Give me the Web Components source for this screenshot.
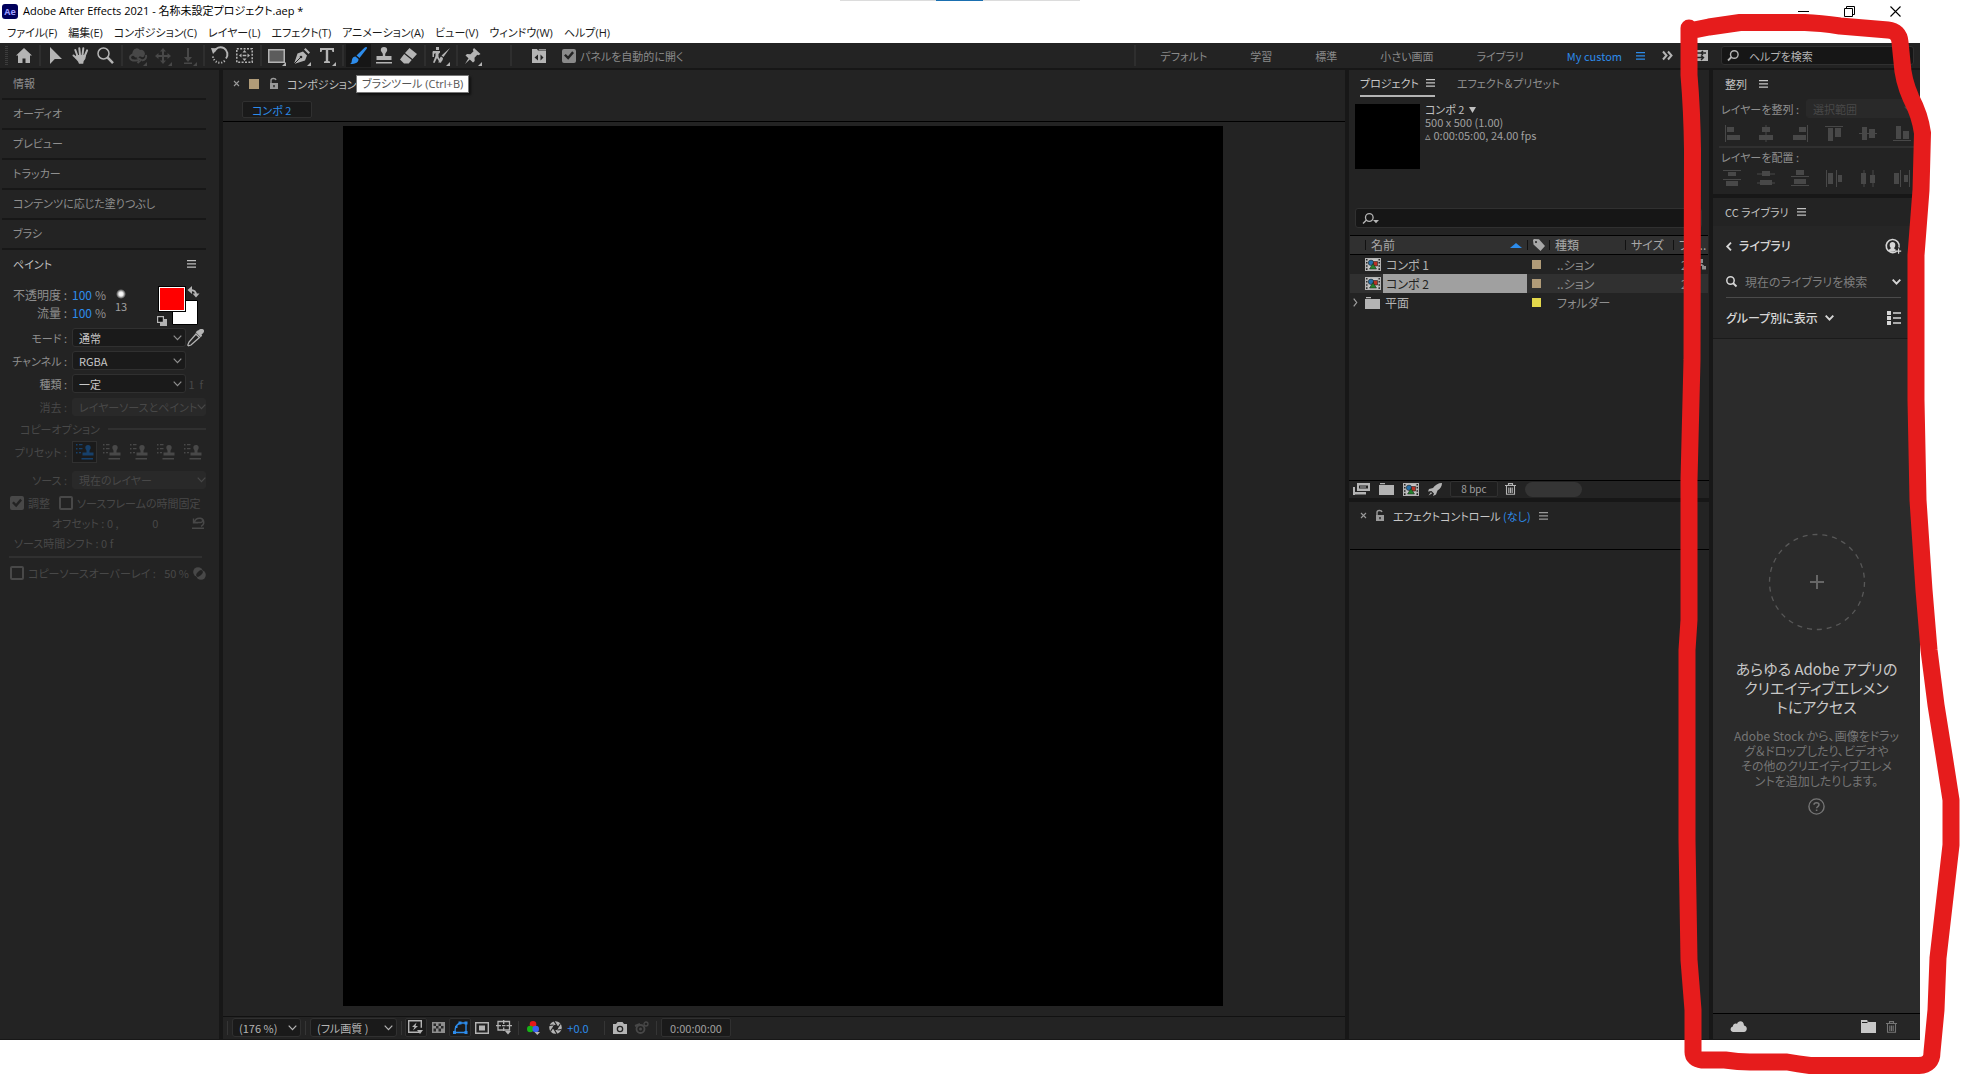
<!DOCTYPE html>
<html lang="ja">
<head>
<meta charset="utf-8">
<title>Adobe After Effects 2021</title>
<style>
html,body{height:100%}
body{margin:0;background:#fff;font-family:"Noto Sans CJK JP","Noto Sans",sans-serif;font-size:12px;line-height:16px;font-feature-settings:"palt";color:#a0a0a0}
</style>
</head>
<body>
<ae-app></ae-app>
<script>
const BASE = `
:host,*{box-sizing:border-box}
button,input,select{font:inherit;font-feature-settings:inherit;color:inherit;background:none;border:0;margin:0;padding:0;border-radius:0;outline:0;line-height:16px}
button{white-space:nowrap;display:flex;align-items:center}
label,span{white-space:nowrap}
.drop{position:relative;display:flex;align-items:center;height:19px;min-width:0}
.drop select{appearance:none;-webkit-appearance:none;width:100%;height:100%;background:#1a1a1a;border:1px solid #303030;border-radius:3px;padding:0 16px 0 6px;color:#c8c8c8;opacity:1;text-overflow:clip}
.drop ae-icon{position:absolute;right:4px;pointer-events:none}
.drop.off select{background:#292929;border-color:#292929;color:#484848;padding-right:8px}
.drop.off ae-icon{color:#484848;right:0}
input[type=checkbox]{appearance:none;-webkit-appearance:none;width:14px;height:14px;flex:none;border:2px solid currentColor;border-radius:2px;display:grid;place-content:center}
input[type=checkbox]:checked{background:currentColor}
input[type=checkbox]:checked::before{content:"";width:10px;height:10px;background:#232323;clip-path:polygon(0 50%,18% 35%,40% 58%,82% 8%,100% 25%,42% 92%)}
`;
function define(name, css, html){
  customElements.define(name, class extends HTMLElement{
    constructor(){
      super();
      const t=document.createElement('template');
      t.innerHTML=`<style>${BASE}${css}</style>${html}`;
      this.attachShadow({mode:'open'}).append(t.content.cloneNode(true));
    }
  });
}

const stampShape='<path d="M10 0a3.200 3.200 0 0 0-3.200 3.200c0 1.600 2 2.300 2 4V9H2.500v4h15V9h-6.300V7.200c0-1.700 2-2.400 2-4A3.200 3.200 0 0 0 10 0zM2 15h16v1.600H2z"/>';
const comp='<path d="M0 0h16v13H0zM1 1v1.500h1.500V1zm0 3v1.500h1.500V4zm0 3.200v1.500h1.500V7.200zm0 3.100V12h1.500v-1.700zM13.500 1v1.500H15V1zm0 3v1.500H15V4zm0 3.200v1.500H15V7.200zm0 3.100V12H15v-1.700z" fill="#b4b4b4" fill-rule="evenodd"/><path d="M3.500 1.500h9v10h-9z" fill="#c9c9c9"/><circle cx="6" cy="4.800" r="2.700" fill="#236ea8" stroke="#222" stroke-width=".6"/><path d="M8.500 3.500h4v4.500h-4z" fill="#b83224" stroke="#222" stroke-width=".6"/><path d="M8 5.500l3.500 5.500h-7z" fill="#23832d" stroke="#222" stroke-width=".6"/>';
const ICONS={
 home:[16,15,'<path d="M8 0L0 7.500h2V15h4.500v-4.500h3V15H14V7.500h2z"/>'],
 arrow:[12,17,'<path d="M0 0v17l4.800-5H12z"/>'],
 hand:[17,17,'<g fill="none" stroke="currentColor" stroke-width="2" stroke-linecap="round"><path d="M5.500 9L3.300 3M8 8L7.300 1.300M10.500 8l.8-6.700M12.700 9l2.400-5.700M4.500 11L1.500 8.500"/></g><path d="M4.500 8h9.200c.3 2.500-.3 4.500-2 6l-.5 2.700H7L6 14.500 2.500 10.500z"/>'],
 zoom:[17,17,'<g fill="none" stroke="currentColor"><circle cx="6.500" cy="6.500" r="5.500" stroke-width="1.500"/><path d="M10.700 10.700l5.300 5.500" stroke-width="2.500"/></g>'],
 orbit:[18,16,'<path d="M4 3a4 4 0 0 1 7-1 4 4 0 0 1 4 6.500c-1 1-3 1-4-.5-1.500 2-5 2-6 0C3 8 3 5 4 3z"/><path d="M5 6C-1 8 0 13 7 12.500l3-.5M8 9.500l4 2.500-3.500 3M17 7c1 3-1 5-4 5.500" fill="none" stroke="currentColor" stroke-width="2"/>'],
 pan:[16,16,'<path d="M8 0l3 3.500H9V7h3.500V5L16 8l-3.500 3V9H9v3.500h2L8 16l-3-3.500h2V9H3.500v2L0 8l3.500-3v2H7V3.500H5z"/>'],
 dolly:[12,16,'<path d="M5 0h2v9h3l-4 5-4-5h3zM2 14.500h8V16H2z"/>'],
 rotate:[17,17,'<path d="M3 4.500a7 7 0 1 1 12 7" fill="none" stroke="currentColor" stroke-width="2"/><path d="M2 9.500a7 7 0 0 0 12.500 3.500" fill="none" stroke="currentColor" stroke-width="2" stroke-dasharray="1.200 1.600"/><path d="M0 1l7 .5-5 5.500z"/>'],
 anchor:[17,15,'<rect x=".8" y=".8" width="15.400" height="13.400" fill="none" stroke="currentColor" stroke-width="1.500" stroke-dasharray="2 1.400"/><path d="M8.500 2l2 2.500h-4zM8.500 13l2-2.500h-4zM3 7.500l2.500-2v4zM14 7.500l-2.500-2v4zM6.700 6.700h3.600v1.600H6.700z"/>'],
 rect:[17,14,'<path d="M.75.75h15.500v12.500H.75z" fill="#5c5c5c" stroke="currentColor" stroke-width="1.500"/>'],
 pen:[16,16,'<path d="M0 16L3.500 5.500 9 3.500l4 4L11 12.500z"/><path d="M10 1.500L11.500 0 16 4.500 14.500 6z"/><path d="M0 16l6.500-6.500" stroke="#232323" stroke-width="1"/><circle cx="7" cy="9" r="1.300" fill="#232323"/>'],
 type:[14,15,'<path d="M0 0h14v4h-1.500l-.7-2H8.200v11l1.800.5V15H4v-1.500l1.800-.5V2H2.200l-.7 2H0z"/>'],
 brush:[17,17,'<path d="M16.500 0c.8.500.5 1.200 0 2L9.500 11 6.500 8.500 14.500.8c.8-.7 1.300-1 2-.8zM5.500 9.500l3 2.500c.3 3-2.500 5-8.500 5 2-1 1.500-2.500 2-4.500.5-1.800 1.800-3 3.500-3z"/>'],
 stamp:[20,17,stampShape],
 eraser:[17,16,'<path d="M9.500 0L17 6l-4.500 5L5 5zM4.200 6l7.500 6-3 3.500H4L0 11.500z"/>'],
 roto:[19,17,'<path d="M5 0h3v3H5zM2 4h7v1.500L7.500 7v3l3 5-1.500 1-3-5-2.500 5L2 15.500 4.500 9V6L3 7v3H1.500V5z"/><path d="M19 1l-6.500 9-2-1.500zM10 9.500l2 1.500c0 3-2 4.500-5 4.500 1.500-1 1-4 3-6z"/>'],
 pin:[16,16,'<path d="M9 0l6.500 6-2 1.200-1.200-.5-2.800 3 .2 3.300-1.700 1.500-3.200-3L0 16l3.500-5.700L.5 7.500 2 6l3.500.2 3-3-.7-1.500z"/>'],
 panelopen:[14,14,'<path fill-rule="evenodd" d="M0 0h5l1 1.500h8V14H0zM6 5.500L2.500 8.500 6 11.500zM8.500 5.500v6l3-3zM6.500 0H14v.8H7z"/>'],
 burger:[9,8,'<path d="M0 0h9v1.200H0zM0 3.300h9v1.200H0zM0 6.600h9v1.200H0z"/>'],
 more:[11,9,'<path d="M1 .5l3.500 4L1 8.500M6 .5l3.500 4L6 8.500" fill="none" stroke="currentColor" stroke-width="2"/>'],
 sync:[16,11,'<path d="M0 0h16v11H0z"/><path d="M3 3h6M11 1l-2 2 2 2M9 3h5M2 7.500h9M9 5.500l2.500 2L9 10" stroke="#232323" fill="none" stroke-width="1.400"/>'],
 search:[12,11,'<circle cx="7.300" cy="4.500" r="3.800" fill="none" stroke="currentColor" stroke-width="1.400"/><path d="M4.500 7L1 10.500" stroke="currentColor" stroke-width="1.800"/>'],
 searchdrop:[17,11,'<circle cx="7.300" cy="4.500" r="3.800" fill="none" stroke="currentColor" stroke-width="1.300"/><path d="M4.500 7L1 10.500" stroke="currentColor" stroke-width="1.500"/><path d="M11 7h6l-3 3.200z"/>'],
 find:[11,11,'<circle cx="4.500" cy="4.500" r="3.700" fill="none" stroke="currentColor" stroke-width="1.500"/><path d="M7 7l3.500 3.500" stroke="currentColor" stroke-width="1.800"/>'],
 chev:[9,6,'<path d="M.7.7l3.800 4 3.800-4" fill="none" stroke="currentColor" stroke-width="1.200"/>'],
 chevb:[9,6,'<path d="M.7.7l3.800 4 3.800-4" fill="none" stroke="currentColor" stroke-width="1.900"/>'],
 back:[6,9,'<path d="M5 .7L1.200 4.500 5 8.300" fill="none" stroke="currentColor" stroke-width="1.800"/>'],
 tri:[5,9,'<path d="M.7.700l3 3.800-3 3.800" fill="none" stroke="currentColor" stroke-width="1.200"/>'],
 close:[7,7,'<path d="M1 1l5 5M6 1L1 6" stroke="currentColor" stroke-width="1.100"/>'],
 lock:[10,11,'<path fill-rule="evenodd" d="M1 5h8v6H1zM4.300 7v2.300h1.400V7z"/><path d="M2 5V2.500C2 0 6.500 0 7 2" fill="none" stroke="currentColor" stroke-width="1.400"/>'],
 dot:[12,12,'<defs><radialGradient id="g"><stop offset="0" stop-color="#fff"/><stop offset=".4" stop-color="#eee"/><stop offset="1" stop-color="#fff" stop-opacity="0"/></radialGradient></defs><circle cx="6" cy="6" r="5" fill="url(#g)"/>'],
 swatch:[44,40,'<path d="M14.500 14.500h25v24h-25z" fill="#fff" stroke="#000"/><path d="M0 0h28v26H0z" fill="#000"/><path d="M1 1h26v24H1z" fill="#fff"/><path d="M2 2h24v22H2z" fill="red"/><path d="M32 4c4 0 6 1 6 5" fill="none" stroke="#b4b4b4" stroke-width="2"/><path d="M34 0v8l-4.500-4zM34.500 7.500h7L38 11.500z" fill="#b4b4b4"/>'],
 defcol:[10,10,'<path d="M3 3h7v7H3z"/><path d="M.6.6h5.800v5.800H.6z" fill="#111" stroke="currentColor" stroke-width="1.200"/>'],
 dropper:[17,17,'<path d="M11.500 1.200C13-.5 16.500-.2 17 1.500c.3 1.500-.5 2.500-2.500 4l.7 1.200-1.500 1.500-5-5L10.200 1.700z"/><path d="M9 5l3.500 3.500L4 16l-2.500.8L.8 16 2 13z" fill="none" stroke="currentColor" stroke-width="1.300"/>'],
 preset:[18,16,'<path d="M12 1a2.700 2.700 0 0 0-2.700 2.700c0 1.300 1.200 2 1.200 3.300v1.500H6.500v3h11v-3h-4V7c0-1.300 1.200-2 1.200-3.300A2.700 2.700 0 0 0 12 1zM5.500 14H17v1.500H5.500z"/><path d="M0 0h1.500v1.500H0zM3 0h3.500v1.200H3zM0 4h1.500v1.500H0zM3 4h3.500v1.200H3zM0 8h1.500v1.500H0zM3 8h2v1.200H3z"/>'],
 reset:[13,12,'<path d="M2.500 5.500H8.500a2 2 0 0 0 0-4.200C5.500 1 3 2 2.500 5.500M1.500 1.500v4.200h4.500M0 11.300h12M9 9.300c4-1.500 3.500-7-.5-8" fill="none" stroke="currentColor" stroke-width="1.400"/>'],
 blend:[13,13,'<circle cx="5" cy="5" r="4.800"/><circle cx="8" cy="8" r="4.800"/><ellipse cx="6.500" cy="6.500" rx="2.200" ry="4" transform="rotate(45 6.500 6.500)" fill="#232323"/>'],
 fast:[17,15,'<path d="M11 12.200H.7V.7h12.600v7" fill="none" stroke="currentColor" stroke-width="1.400"/><path d="M8.500 2.500L4 7h2.500L5 10.500l5-4.500H7.500zM9 10h6l-3 4z"/>'],
 checker:[13,11,'<path d="M0 0h13v11H0z" fill="#8e8e8e"/><path d="M1.500 1.500h2.500V4H1.500zM6.500 1.500H9V4H6.500zM4 4h2.500v2.500H4zM9 4h2.500v2.500H9zM1.500 6.500H4V9.500H1.500zM6.500 6.500H9v3H6.500z" fill="#2a2a2a"/>'],
 mask:[15,13,'<path d="M2 11C2 6 3 4 7 2h6v9.500H2z" fill="none" stroke="currentColor" stroke-width="1.400"/><path d="M0 10h3v3H0zM5.500.5h3v3h-3zM11.500.5h3v3h-3zM11.500 10h3v3h-3zM2 5h2.500v2H2z"/>'],
 roi:[14,12,'<path d="M.7.700h12.600v10.600H.7z" fill="none" stroke="currentColor" stroke-width="1.400"/><path d="M4 3.500h6v5H4z"/>'],
 grid:[16,15,'<path d="M2 1.500h11.500v8.500H2z M7.700 0v4M7.700 7.500V11M0 5.700h5M10.500 5.700H16M6 5.700h3.500" fill="none" stroke="currentColor" stroke-width="1.300"/><path d="M9 11h6l-3 3.500z"/>'],
 rgb:[13,14,'<circle cx="6" cy="3.300" r="3.300" fill="#e81818"/><circle cx="3.300" cy="8" r="3.300" fill="#16b316"/><circle cx="8.700" cy="8" r="3.300" fill="#3b62ee"/><path d="M7.500 11H13l-2.700 3z"/>'],
 aperture:[13,13,'<circle cx="6.500" cy="6.500" r="4.500" fill="none" stroke="currentColor" stroke-width="3.600"/><path d="M5 0l2.500 4M11.500 2.500L9 6.500M12.500 8.500L8.500 9M8 13L5.500 9M1.500 10.500L4 6.500M0 4.500L4.500 4" stroke="#232323" stroke-width="1.200"/>'],
 camera:[14,12,'<path fill-rule="evenodd" d="M4.500 0h5L11 2h3v10H0V2h3zM7 3.700a3.300 3.300 0 1 0 0 6.600 3.300 3.300 0 0 0 0-6.600zM7 5a2 2 0 1 1 0 4 2 2 0 0 1 0-4z"/>'],
 showsnap:[14,13,'<circle cx="5.500" cy="8" r="4" fill="none" stroke="currentColor" stroke-width="1.800"/><circle cx="5.500" cy="8" r="1.500"/><circle cx="11" cy="3" r="2" fill="none" stroke="currentColor" stroke-width="1.300"/><path d="M0 5l5-2" stroke="currentColor" stroke-width="2"/>'],
 comp:[16,13,comp],
 folder:[15,12,'<path d="M0 2h15v10H0zM1 0h5v1.200H1z"/>'],
 tag:[12,12,'<path fill-rule="evenodd" d="M0 1l1-1 5 .3L12 7l-4.500 5L.5 5.500zM3 2a1.100 1.100 0 1 0 0 2.200A1.100 1.100 0 0 0 3 2z"/>'],
 sort:[12,5,'<path d="M6 0l6 5H0z"/>'],
 flow:[9,11,'<path d="M2 0h4v4H2zM0 7h3v3.500H0zM5 7h4v3.500H5zM3.500 4v2.500H1V7h6v-.5z"/>'],
 interpret:[17,12,'<path d="M4 0h13v8H4z"/><path d="M6 2.500h9v3H6z" fill="#232323"/><path d="M7 3.500h6v1H7zM0 4h2v8H0zM0 9h13v2.500H0z"/>'],
 rocket:[14,13,'<path d="M14 0c-4 0-7 2-9 5L1 6 0 8.500l3.500-.5 2.500 2.500L5 13l3-1.500 1.500-4C12.500 5.500 14 3 14 0zM3 9l-2.500 3.500L4 10.500z"/>'],
 trash:[11,12,'<path d="M0 2.500h11M3.500 2V.6h4V2M1.500 3v8.300h8V3M3.800 4.500v5.500M5.500 4.500v5.500M7.200 4.500v5.500" fill="none" stroke="currentColor" stroke-width="1.100"/>'],
 caret:[7,6,'<path d="M0 0h7L3.500 6z"/>'],
 user:[16,15,'<path d="M11.500 12.300a6.500 6.500 0 1 1 2.500-3.800" fill="none" stroke="currentColor" stroke-width="1.600"/><path d="M7.500 3c3.600 0 3.300 4.500 1.700 6 0 1.300 1.300 1.400 2 2C10 13 5 13.500 3 11.500c.5-1.200 2.800-1 2.800-2.500C4.200 7.500 4 3 7.500 3zM11 11.500h2v-2h1.200v2h2v1.200h-2v2H13v-2h-2z"/>'],
 list:[14,14,'<path d="M0 0h4v4H0zM0 5h4v4H0zM0 10h4v4H0zM6 1.300h8v1.400H6zM6 6.300h8v1.400H6zM6 11.300h8v1.400H6z"/>'],
 cloud:[17,11,'<path d="M2.800 11a2.800 2.800 0 0 1 0-5.500C3 3 5.500 1.800 7 3c1-4 7-4 7 1.500C18 5 17.500 11 14 11z"/>'],
 libfolder:[15,13,'<path d="M0 0h6l1.500 2H15v11H0z"/><path d="M1 2.500h5l.8-.7" stroke="#232323" fill="none"/>'],
 drop:[98,98,'<circle cx="49" cy="49" r="47.500" fill="none" stroke="#585858" stroke-width="1.300" stroke-dasharray="5 4.950"/><path d="M42 49h14M49 42v14" stroke="#666" stroke-width="2"/>'],
 help:[17,17,'<circle cx="8.500" cy="8.500" r="7.600" fill="none" stroke="currentColor" stroke-width="1.400"/><path d="M6 6.800C6 4 11 4 11 6.800c0 1.800-2.400 1.700-2.400 3.500" fill="none" stroke="currentColor" stroke-width="1.500"/><path d="M7.800 11.500h1.600V13H7.800z"/>'],
 al:[15,17,'<path d="M0 0h1v17H0zM2 2h7v5H2zM2 10h13v5H2z"/>'],
 ac:[15,17,'<path d="M6.500 0h1v17h-1zM3 2h8v5H3zM0 10h14v5H0z"/>'],
 ar:[15,17,'<path d="M14 0h1v17h-1zM6 2h7v5H6zM0 10h13v5H0z"/>'],
 at:[18,15,'<path d="M0 0h18v1H0zM3 2h5v13H3zM10 2h6v9h-6z"/>'],
 am:[18,15,'<path d="M0 7h18v1H0zM3 1h5v13H3zM10 3h6v9h-6z"/>'],
 ab:[18,15,'<path d="M0 14h18v1H0zM3 0h5v13H3zM10 5h6v8h-6z"/>'],
 dt:[18,16,'<path d="M0 0h18v1H0zM5 2h8v4H5zM0 9h18v1H0zM3 11h12v5H3z"/>'],
 dm:[18,15,'<path d="M0 2.500h18v1H0zM5 0h8v5H5zM0 11.500h18v1H0zM3 9h12v5H3z"/>'],
 db:[18,16,'<path d="M0 6h18v1H0zM5 0h8v5H5zM0 15h18v1H0zM3 9h12v5H3z"/>'],
 dl:[16,17,'<path d="M0 0h1v17H0zM2 3h5v11H2zM10 0h1v17h-1zM12 5h4v7h-4z"/>'],
 dc:[15,17,'<path d="M2.500 0h1v17h-1zM0 3h5v11H0zM11.500 0h1v17h-1zM9 5h5v8H9z"/>'],
 dr:[16,17,'<path d="M6 0h1v17H6zM0 3h5v11H0zM15 0h1v17h-1zM10 5h4v7h-4z"/>'],
 min:[11,11,'<path d="M0 5h11v1H0z"/>'],
 restore:[11,11,'<path d="M.5 2.500h8v8h-8zM2.500 2V.5h8v8H9" fill="none" stroke="currentColor"/>'],
 x:[11,11,'<path d="M.5.500l10 10M10.500.500l-10 10" fill="none" stroke="currentColor" stroke-width="1.100"/>']
};
customElements.define('ae-icon', class extends HTMLElement{
  constructor(){super();this.attachShadow({mode:'open'})}
  connectedCallback(){
    const [w,h,body]=ICONS[this.getAttribute('name')];
    this.shadowRoot.innerHTML=`<style>:host{display:inline-flex;flex:none}svg{display:block;fill:currentColor;overflow:visible}</style><svg width="${w}" height="${h}" viewBox="0 0 ${w} ${h}" aria-hidden="true">${body}</svg>`;
  }
});
const ic=n=>`<ae-icon name="${n}"></ae-icon>`;
const ib=(n,l,c='')=>`<button class="${c}" aria-label="${l}">${ic(n)}</button>`;

define('ae-titlebar',`
:host{display:flex;align-items:center;height:22px;padding:0 2px 0 2px;color:#000;font-family:"Open Sans","Noto Sans CJK JP",sans-serif;font-size:11px;background:#fff}
.logo{width:16px;height:15px;border-radius:3px;background:#00005b;color:#9c9cff;font-size:9px;line-height:15px;font-weight:700;text-align:center;margin-right:5px}
.t{flex:1}
button{width:46px;height:22px;justify-content:center}
`,`<span class="logo">Ae</span><span class="t">Adobe After Effects 2021 - 名称未設定プロジェクト.aep *</span>${ib('min','最小化')}${ib('restore','元に戻す')}${ib('x','閉じる')}`);

define('ae-menubar',`
:host{display:flex;align-items:center;gap:11px;height:21px;padding-left:7px;background:#fff;color:#1a1a1a;font-family:"Open Sans","Noto Sans CJK JP",sans-serif;font-size:11px}
`,['ファイル(F)','編集(E)','コンポジション(C)','レイヤー(L)','エフェクト(T)','アニメーション(A)','ビュー(V)','ウィンドウ(W)','ヘルプ(H)'].map(m=>`<button>${m}</button>`).join(''));

define('ae-tooltip',`:host{display:block;padding:0 5px;background:#fff;border:1px solid #777;color:#555;box-shadow:2px 2px 2px #0008;white-space:nowrap;font-family:"Open Sans","Noto Sans CJK JP",sans-serif;font-size:11px}`,`<slot></slot>`);

define('ae-toolbar',`
:host{display:flex;align-items:center;height:27px;padding-left:11px;background:#232323;border-bottom:2px solid #171717;position:relative;z-index:2}
:host::before{content:"";position:absolute;left:5px;top:3px;bottom:3px;width:3px;background:repeating-linear-gradient(#3c3c3c 0 1px,#232323 1px 2px)}
.b{width:25px;height:23px;justify-content:center;color:#b4b4b4;position:relative}
.off{color:#484848}
.m::after{content:"";position:absolute;right:3px;bottom:1px;border:2px solid transparent;border-right-color:currentColor;border-bottom-color:currentColor}
.on{color:#2d8ceb;background:#161616}
i{width:7px;height:21px;display:flex;justify-content:center;flex:none}
i::before{content:"";width:2px;background:#2e2e2e}
.tip{position:relative;display:flex}
ae-tooltip{position:absolute;left:10px;top:31px}
.auto{display:flex;align-items:center;gap:4px;color:#8a8a8a;margin-left:11px;font-size:11px}
.far{margin-left:22px}.pnl{margin-left:12px}
.sp{flex:1}
nav{display:flex;gap:43px;align-items:center;font-size:11px;color:#8a8a8a;padding-left:22px;margin-right:14px}
nav .cur{color:#2d8ceb}
.ws{color:#2d8ceb;margin-right:17px}
.mo{color:#b4b4b4;margin-right:19px}
.sy{color:#b4b4b4;margin-right:13px}
.q{display:flex;align-items:center;gap:10px;width:193px;height:19px;background:#161616;border:1px solid #303030;border-radius:3px;padding-left:5px;color:#b4b4b4;margin-right:6px;font-size:11px}
input::placeholder{color:#b4b4b4;opacity:1}
.q input{width:140px}
`,`${ib('home','ホーム','b')}<i></i>${ib('arrow','選択ツール','b')}${ib('hand','手のひらツール','b')}${ib('zoom','ズームツール','b')}<i></i>${ib('orbit','軌道カメラ','b off m')}${ib('pan','パン','b off m')}${ib('dolly','ドリー','b off m')}<i></i>${ib('rotate','回転ツール','b')}${ib('anchor','アンカーポイントツール','b')}<i></i>${ib('rect','長方形ツール','b m')}${ib('pen','ペンツール','b m')}${ib('type','文字ツール','b m')}<i></i><span class="tip">${ib('brush','ブラシツール','b on')}<ae-tooltip>ブラシツール (Ctrl+B)</ae-tooltip></span>${ib('stamp','コピースタンプツール','b')}${ib('eraser','消しゴムツール','b')}<i></i>${ib('roto','ロトブラシツール','b m')}<i></i>${ib('pin','パペットピンツール','b m')}<i class="far"></i><span class="pnl">${ib('panelopen','パネル','b')}</span><label class="auto"><input type="checkbox" checked>パネルを自動的に開く</label><span class="sp"></span><i></i><nav><button>デフォルト</button><button>学習</button><button>標準</button><button>小さい画面</button><button>ライブラリ</button><button class="cur">My custom</button></nav>${ib('burger','ワークスペースメニュー','ws')}${ib('more','その他','mo')}${ib('sync','ワークスペース','sy')}<label class="q">${ic('search')}<input type="search" aria-label="ヘルプを検索" placeholder="ヘルプを検索"></label>`);

define('ae-side-tab',`:host{display:flex;align-items:center;height:30px;padding:0 11px 2px;margin-left:2px;border-bottom:2px solid #171717;font-size:11px;color:#8f8f8f}`,`<button><slot></slot></button>`);

define('ae-paint',`
:host{display:block;font-size:11px;position:relative;color:#8f8f8f}
.h{display:flex;justify-content:space-between;align-items:center;height:28px;padding:0 10px 0 13px;color:#c0c0c0}
.r{display:grid;grid-template-columns:72px 114px 1fr;align-items:center;height:23px}
.r>label,.r>.l{text-align:right;padding-right:5px}
.v{display:flex;gap:3px;align-items:center}
.v button{color:#2d8ceb}
.top{display:flex;height:48px;padding-top:8px;font-size:12px}
.top .r{height:18px;grid-template-columns:72px 40px}
.br{display:flex;flex-direction:column;align-items:center;margin:2px 0 0 2px;width:14px;color:#a0a0a0;line-height:12px;font-size:11px}
.sw{margin-left:30px;align-self:flex-start}
.df{position:absolute;left:157px;top:66px;color:#b4b4b4}
.dp{color:#b4b4b4;padding-left:1px}
.off{color:#484848}
.wide{grid-template-columns:72px 1fr}
.wide .drop{height:18px}
.sec{display:flex;align-items:center;height:22px;gap:8px;padding-left:20px}
.sec::after{content:"";flex:1;height:2px;background:#303030}
.pre{display:flex;gap:2px;margin-right:-8px}
.pre button{width:25px;height:22px;justify-content:center;border:1px solid transparent}
.pre .on{border-color:#303030;background:#1b1b1b;color:#17406a}
.src{height:26px;margin:4px 0 0}
.ck{display:flex;align-items:center;height:20px;gap:4px;padding:0 0 0 10px}
.ck label{display:flex;align-items:center;gap:4px}
.ck label+label{margin-left:5px}
.of{padding:0 1px 0 52px}
.of span+span{flex:1;text-align:center}
.tm{padding-left:14px}
.ov{height:26px}
.ov span{margin-left:auto}
hr{border:0;height:2px;background:#303030;margin:3px 4px 2px 9px}
`,`<div class="h"><span>ペイント</span>${ib('burger','パネルメニュー')}</div>
<div class="top"><div><div class="r"><span class="l">不透明度 :</span><span class="v"><button>100</button>%</span></div><div class="r"><span class="l">流量 :</span><span class="v"><button>100</button>%</span></div></div><span class="br">${ic('dot')}<span>13</span></span>${ib('swatch','描画色','sw')}${ib('defcol','初期色','df')}</div>
<div class="r"><label for="a">モード :</label><span class="drop"><select id="a"><option>通常</option></select>${ic('chev')}</span>${ib('dropper','スポイト','dp')}</div>
<div class="r"><label for="b">チャンネル :</label><span class="drop"><select id="b"><option>RGBA</option></select>${ic('chev')}</span></div>
<div class="r"><label for="c">種類 :</label><span class="drop"><select id="c"><option>一定</option></select>${ic('chev')}</span><span class="off">&nbsp;1&nbsp; f</span></div>
<div class="off"><div class="r wide"><label for="d">消去 :</label><span class="drop off"><select id="d" disabled><option>レイヤーソースとペイント</option></select>${ic('chev')}</span></div>
<div class="sec">コピーオプション</div>
<div class="r wide"><span class="l">プリセット :</span><span class="pre">${ib('preset','プリセット 1','on')}${ib('preset','プリセット 2')}${ib('preset','プリセット 3')}${ib('preset','プリセット 4')}${ib('preset','プリセット 5')}</span></div>
<div class="r wide src"><label for="e">ソース :</label><span class="drop off"><select id="e" disabled><option>現在のレイヤー</option></select>${ic('chev')}</span></div>
<div class="ck"><label><input type="checkbox" checked disabled>調整</label><label><input type="checkbox" disabled>ソースフレームの時間固定</label></div>
<div class="ck of"><span>オフセット : 0 ,</span><span>0</span>${ib('reset','リセット')}</div>
<div class="ck tm"><span>ソース時間シフト : 0 f</span></div><hr>
<div class="ck ov"><label><input type="checkbox" disabled>コピーソースオーバーレイ :</label><span>50 %</span>${ib('blend','差の絶対値モード')}</div></div>`);

define('ae-left',`:host{display:block;width:219px;flex:none;background:#232323;padding-right:13px;overflow:hidden}`,
 ['情報','オーディオ','プレビュー','トラッカー','コンテンツに応じた塗りつぶし','ブラシ'].map(t=>`<ae-side-tab>${t}</ae-side-tab>`).join('')+'<ae-paint></ae-paint>');

define('ae-composition',`
:host{display:flex;flex-direction:column;flex:1;min-width:0;background:#232323}
.h{display:flex;align-items:center;height:27px;padding-left:10px;color:#9a9a9a}
.sq{width:10px;height:10px;background:#b09b78;margin:0 10px 0 9px}
.h .n{color:#c0c0c0;margin-left:8px;font-size:11px}
.chip{margin:4px 0 3px 19px;width:70px;height:17px;padding-left:9px;background:#1a1a1a;border:1px solid #303030;border-radius:2px;color:#2d8ceb;font-size:11px}
.v{flex:1;min-height:0;display:flex;justify-content:center;padding:4px 3px 10px 0;border-top:1px solid #000}
.c{height:100%;aspect-ratio:1;background:#000}
.f{display:flex;align-items:center;height:23px;border-top:1px solid #111;color:#b4b4b4;padding:0 0 1px 4px;font-size:11px}
.f i{width:1px;height:14px;background:#353535}
.f button{width:22px;height:19px;justify-content:center}
.f .bl{color:#2d8ceb}
.f .ev{width:24px}
.f .bx{border:1px solid #303030;background:#1a1a1a;border-radius:2px}
.f .tc{width:70px;margin-left:1px;color:#a0a0a0}
.f .s{margin:0 3px}
.f .s2{margin:0 4px 0 14px}
.dim{color:#484848}
.drop{margin:0 4px}
.zoom{width:69px}.res{width:87px}
.drop select{color:#b4b4b4}
`,`<div class="h">${ib('close','閉じる')}<span class="sq"></span>${ic('lock')}<span class="n">コンポジション</span></div>
<button class="chip">コンポ 2</button><div class="v"><div class="c"></div></div>
<div class="f"><i></i><span class="drop zoom"><select aria-label="拡大率"><option>(176 %)</option></select>${ic('chev')}</span><i></i><span class="drop res"><select aria-label="解像度"><option>(フル画質 )</option></select>${ic('chev')}</span><i style="margin-right:3px"></i>${ib('fast','高速プレビュー','bx')}${ib('checker','透明グリッド')}${ib('mask','マスク表示','bl bx')}${ib('roi','目標範囲')}${ib('grid','グリッド')}<i class="s"></i>${ib('rgb','チャンネル')}${ib('aperture','露出')}<button class="bl ev">+0.0</button><i class="s2"></i>${ib('camera','スナップショット')}<span class="dim">${ib('showsnap','スナップショットを表示')}</span><i class="s"></i><button class="bx tc">0:00:00:00</button></div>`);

define('ae-project',`
:host{display:flex;flex-direction:column;height:428px;flex:none;background:#232323;font-size:11px}
.tabs{display:flex;height:27px;align-items:center;padding-left:11px;gap:22px}
.tabs button{height:27px;color:#8f8f8f;border-bottom:2px solid transparent}
.tabs .on{gap:7px;color:#c8c8c8;border-color:#b4b4b4}
.info{display:flex;gap:5px;padding:6px 0 0 6px;height:110px}
.th{width:65px;height:65px;margin-top:1px;background:#000}
.info button,.info span{display:flex;align-items:center;height:13px;line-height:13px;gap:5px}
.info button{color:#c0c0c0}
.q{display:flex;align-items:center;gap:4px;height:20px;margin:1px 7px 7px 6px;background:#161616;border:1px solid #303030;border-radius:3px;padding-left:6px;color:#b4b4b4}
.q input{flex:1}
table{margin-left:1px;width:358px;table-layout:fixed;border-collapse:collapse;font-size:12px}
tr{height:19px}
th{font-weight:400;text-align:left;background:#303030;border-top:1px solid #000;border-bottom:1px solid #000;padding:0;color:#a8a8a8;height:19px}
td{padding:0;height:19px}
th>span{display:flex;align-items:center;border-left:1px solid #111;height:10px;padding-left:5px}
th,td{line-height:16px;white-space:nowrap}
.nm{display:flex;align-items:center;height:19px;gap:2px;color:#b4b4b4}
.nm b{font-weight:400;flex:1;padding-left:3px;line-height:19px}
.sel{background:#303030}.sel b{background:#a0a0a0;color:#232323}
.sw{display:block;width:9px;height:9px;background:#b09b78;margin-left:5px}
.y{background:#e3d84b}
.k{padding-left:8px;color:#8f8f8f}
.g{flex:1}
.f{display:flex;align-items:center;height:18px;color:#b4b4b4;padding:0 0 1px 4px;gap:9px;border-top:1px solid #000}
.bpc{width:48px;height:16px;margin:0 -2px 0 -1px;justify-content:center;border:1px solid #303030;border-radius:2px;color:#a0a0a0;background:#1e1e1e;font-size:10px}
.bar{width:57px;height:15px;border-radius:8px;background:#353535}
`,`<div class="tabs"><button class="on">プロジェクト ${ic('burger')}</button><button>エフェクト＆プリセット</button></div>
<div class="info"><div class="th"></div><div><button>コンポ 2 ${ic('caret')}</button><span>500 x 500 (1.00)</span><span>▵ 0:00:05:00, 24.00 fps</span></div></div>
<label class="q">${ic('searchdrop')}<input type="search" aria-label="プロジェクトを検索"></label>
<table><colgroup><col style="width:15px"><col style="width:162px"><col style="width:22px"><col style="width:76px"><col style="width:48px"><col></colgroup>
<thead><tr><th></th><th><span>名前<ae-icon name="sort" style="color:#2d8ceb;margin:0 5px 0 auto"></ae-icon></span></th><th><span>${ic('tag')}</span></th><th><span>種類</span></th><th><span>サイズ</span></th><th><span>フレ..</span></th></tr></thead>
<tbody><tr><td></td><td><span class="nm">${ic('comp')}<b>コンポ 1</b></span></td><td><span class="sw"></span></td><td class="k">..ション</td><td></td><td class="k">24 ${ic('flow')}</td></tr>
<tr class="sel"><td></td><td><span class="nm">${ic('comp')}<b>コンポ 2</b></span></td><td><span class="sw"></span></td><td class="k">..ション</td><td></td><td class="k">24</td></tr>
<tr><td><button aria-label="展開" style="margin-left:3px">${ic('tri')}</button></td><td><span class="nm">${ic('folder')}<b>平面</b></span></td><td><span class="sw y"></span></td><td class="k">フォルダー</td><td></td><td></td></tr></tbody></table>
<div class="g"></div><div class="f">${ib('interpret','フッテージを変換')}${ib('folder','新規フォルダー')}${ib('comp','新規コンポジション')}${ib('rocket','プロジェクト設定')}<button class="bpc">8 bpc</button>${ib('trash','削除')}<span class="bar"></span></div>`);

define('ae-effects',`
:host{display:flex;flex-direction:column;flex:1;background:#232323;font-size:11px}
.h{display:flex;align-items:center;height:48px;padding:0 0 20px 10px;margin-left:1px;border-bottom:1px solid #000;color:#9a9a9a;gap:8px}
.n{color:#c8c8c8}.n b{font-weight:400;color:#2d8ceb}
`,`<div class="h">${ib('close','閉じる')}${ic('lock')}<span class="n">エフェクトコントロール <b>(なし)</b></span>${ib('burger','パネルメニュー')}</div>`);

define('ae-align',`
:host{display:block;height:124px;background:#232323;font-size:11px;flex:none;overflow:hidden}
.h{display:flex;align-items:center;gap:12px;height:27px;padding-left:12px;color:#c8c8c8}
.r{display:flex;align-items:center;gap:7px;height:23px;padding-left:8px;color:#8f8f8f}
.r .drop{width:107px;margin-right:5px}
.i{display:flex;color:#484848;height:26px;align-items:center;margin-left:2px}
.i button{width:34px;flex:none;height:22px;justify-content:center}
hr{border:0;margin:0 6px;height:2px;background:#303030}
.lb{height:17px}
`,`<div class="h"><span>整列</span>${ib('burger','パネルメニュー')}</div>
<div class="r"><label for="s">レイヤーを整列 :</label><span class="drop off"><select id="s" disabled><option>選択範囲</option></select>${ic('chev')}</span></div>
<div class="i">${['al','ac','ar','at','am','ab'].map(n=>ib(n,'整列')).join('')}</div><hr>
<div class="r lb">レイヤーを配置 :</div>
<div class="i">${['dt','dm','db','dl','dc','dr'].map(n=>ib(n,'配置')).join('')}</div>`);

define('ae-library',`
:host{display:flex;flex-direction:column;flex:1;background:#262626;min-height:0}
.h{display:flex;align-items:center;gap:8px;height:28px;padding-left:12px;color:#c0c0c0;font-size:11px;background:#232323}
.top{padding-top:2px}
.r{display:flex;align-items:center;height:36px;margin:0 19px 0 13px;color:#d6d6d6}
.r button{gap:7px;font-weight:500}
.r>:last-child{margin-left:auto}
.s{border-bottom:1px solid #4b4b4b;height:32px;margin-top:2px}
.s label{display:flex;align-items:center;gap:8px;flex:1}
.s input{width:140px}
.g{height:40px}
input::placeholder{color:#7e7e7e;opacity:1}
.e{flex:1;background:#2b2b2b;border-top:1px solid #1a1a1a;border-bottom:1px solid #000;display:flex;flex-direction:column;align-items:center;text-align:center;padding-top:194px;white-space:nowrap}
h2{margin:28px 0 12px;font-size:15px;line-height:19px;font-weight:400;color:#c8c8c8}
p{margin:0 0 10px;line-height:15px;color:#757575}
.hp,.del{color:#757575}
.f{display:flex;align-items:center;height:25px;padding:0 23px 0 17px;gap:10px;color:#c8c8c8}
.sp{flex:1}
`,`<div class="h"><span>CC ライブラリ</span>${ib('burger','パネルメニュー')}</div>
<div class="top"><div class="r">
<button>${ic('back')}ライブラリ</button>${ib('user','ユーザーを招待')}</div>
<div class="r s"><label>${ic('find')}<input type="search" aria-label="現在のライブラリを検索" placeholder="現在のライブラリを検索"></label>${ib('chevb','検索範囲')}</div>
<div class="r g"><button>グループ別に表示${ic('chevb')}</button>${ib('list','リスト表示')}</div></div>
<div class="e">${ib('drop','追加')}<h2>あらゆる Adobe アプリの<br>クリエイティブエレメン<br>トにアクセス</h2><p>Adobe Stock から、画像をドラッ<br>グ＆ドロップしたり、ビデオや<br>その他のクリエイティブエレメ<br>ントを追加したりします。</p>${ib('help','ヘルプ','hp')}</div>
<div class="f">${ib('cloud','同期')}<span class="sp"></span>${ib('libfolder','新規グループ')}${ib('trash','削除','del')}</div>`);

define('ae-marker',`:host{display:block;position:absolute;inset:0;z-index:9;pointer-events:none}svg{display:block;width:100%;height:100%}`,
`<svg viewBox="0 0 1961 1076" preserveAspectRatio="none" fill="none" stroke="#e61c1c" stroke-width="17" stroke-linecap="round" stroke-linejoin="round" aria-hidden="true"><path d="M1689 28L1689 75Q1692 110 1692.500 150L1692 360L1689 480L1689 620L1687 650L1687 840L1689 960L1693 1010L1693 1052Q1693 1059 1702 1060L1725 1060Q1738 1062 1750 1062L1787 1062Q1798 1064 1810 1065.500L1919 1065.500Q1932 1065 1932 1052L1936 1010L1938 958L1951 845L1951 800L1944 755L1936 705L1929 650L1924 590L1918 500L1916 400L1916 255L1921 190L1922.500 133Q1920 115 1911 98Q1903 80 1902 62L1900 42Q1899 31 1888 30L1840 26Q1820 23 1805 22.500L1740 22.500L1709 27L1689 31"/></svg>`);

define('ae-app',`
:host{display:flex;flex-direction:column;height:100vh;min-height:900px;padding:0 41px 36px 0;position:relative;overflow:hidden}
.strip{position:absolute;top:0;left:840px;width:240px;height:1px;background:linear-gradient(90deg,#dcdcdc 96px,#1a6fb0 96px 143px,#dcdcdc 143px)}
.w{flex:1;min-height:0;display:flex;gap:4px;background:#171717;border-bottom:1px solid #171717}
.p{width:360px;flex:none;display:flex;flex-direction:column;gap:4px}
.r{width:207px;flex:none;display:flex;flex-direction:column;gap:4px}
`,`<ae-titlebar></ae-titlebar><ae-menubar></ae-menubar><ae-toolbar></ae-toolbar>
<div class="w"><ae-left></ae-left><ae-composition></ae-composition><div class="p"><ae-project></ae-project><ae-effects></ae-effects></div><div class="r"><ae-align></ae-align><ae-library></ae-library></div></div>
<div class="strip"></div><ae-marker></ae-marker>`);
</script>
</body>
</html>
